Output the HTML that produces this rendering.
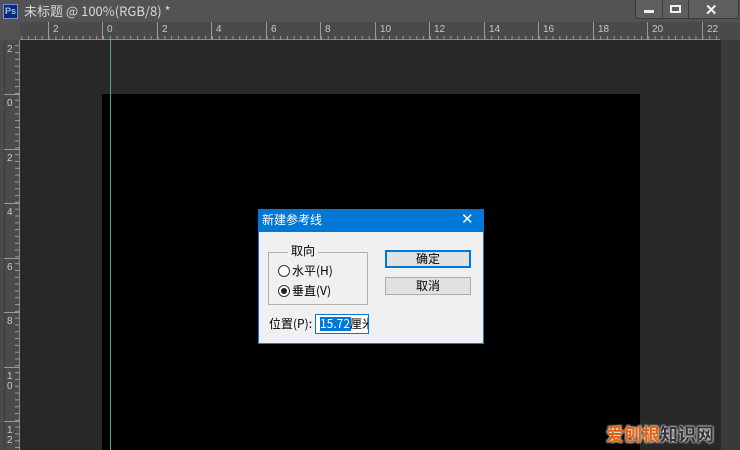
<!DOCTYPE html><html><head><meta charset="utf-8"><style>
*{margin:0;padding:0;box-sizing:border-box}
body{width:740px;height:450px;overflow:hidden;background:#282828;position:relative;font-family:"Liberation Sans","Noto Sans CJK SC",sans-serif}
.a{position:absolute}
.cj{font-family:"Noto Sans CJK SC","Liberation Sans",sans-serif}
</style></head><body>
<div class="a" style="left:0;top:0;width:740px;height:22px;background:#535353"></div>
<div class="a" style="left:3px;top:4px;width:15px;height:15px;background:#0d2a6e;border:1px solid #6f8fd8;color:#9fc2ff;font-size:9px;font-weight:bold;line-height:13px;text-align:center">Ps</div>
<div class="a cj" style="left:24px;top:2px;color:#d8d8d8;font-size:13px;line-height:18px">未标题 @ 100%(RGB/8) *</div>
<div class="a" style="left:635px;top:0;width:104px;height:19px;background:#5e5e5e;border:1px solid #3c3c3c;border-top:0;border-radius:0 0 3px 3px"></div>
<div class="a" style="left:662px;top:0;width:1px;height:19px;background:#3c3c3c"></div>
<div class="a" style="left:688px;top:0;width:1px;height:19px;background:#3c3c3c"></div>
<div class="a" style="left:644px;top:10px;width:10px;height:3px;background:#eee"></div>
<div class="a" style="left:670px;top:5px;width:11px;height:8px;border:2px solid #eee"></div>
<div class="a" style="left:705px;top:1px;color:#eee;font-size:15px;font-weight:bold">✕</div>
<svg class="a" style="left:0;top:22px" width="740" height="428">
<rect x="0" y="0" width="740" height="18" fill="#4a4a4a"/>
<rect x="0" y="0" width="20" height="428" fill="#4a4a4a"/>
<rect x="0" y="0" width="20" height="18" fill="#535353"/>
<rect x="4" y="18" width="1" height="410" fill="#3a3a3a"/>
<rect x="20" y="17" width="700" height="1" fill="#888"/>
<rect x="19" y="18" width="1" height="410" fill="#888"/>
<g stroke="#999" stroke-width="1">
<path d="M48.5 0V18M102.5 0V18M157.5 0V18M211.5 0V18M266.5 0V18M320.5 0V18M375.5 0V18M429.5 0V18M484.5 0V18M538.5 0V18M593.5 0V18M647.5 0V18M702.5 0V18"/>
<path d="M4 72.5H20M4 127.5H20M4 181.5H20M4 236.5H20M4 290.5H20M4 345.5H20M4 399.5H20"/>
</g>
<defs>
<pattern id="h" x="21.3" width="6.81" height="18" patternUnits="userSpaceOnUse"><rect x="0" y="14" width="1" height="4" fill="#999"/></pattern>
<pattern id="v" y="-4" width="20" height="6.81" patternUnits="userSpaceOnUse"><rect x="15" y="0" width="5" height="1" fill="#999"/></pattern>
</defs>
<rect x="20" y="0" width="700" height="18" fill="url(#h)"/>
<rect x="0" y="18" width="20" height="410" fill="url(#v)"/>
<g fill="#c8c8c8" font-size="10" font-family="Liberation Sans">
<text x="53" y="10">2</text><text x="107" y="10">0</text><text x="162" y="10">2</text><text x="216" y="10">4</text><text x="271" y="10">6</text><text x="325" y="10">8</text><text x="380" y="10">10</text><text x="434" y="10">12</text><text x="489" y="10">14</text><text x="543" y="10">16</text><text x="598" y="10">18</text><text x="652" y="10">20</text><text x="707" y="10">22</text>
<text x="7" y="30">2</text><text x="7" y="84">0</text><text x="7" y="139">2</text><text x="7" y="193">4</text><text x="7" y="248">6</text><text x="7" y="302">8</text><text x="7" y="357">1</text><text x="7" y="367">0</text><text x="7" y="411">1</text><text x="7" y="421">2</text>
</g>
</svg>
<div class="a" style="left:720px;top:40px;width:20px;height:410px;background:#3a3a3a;border-left:1px solid #2a2a2a"></div>
<div class="a" style="left:102px;top:94px;width:538px;height:356px;background:#000"></div>
<div class="a" style="left:110px;top:40px;width:1px;height:410px;background:#4aa8a3"></div>
<div class="a" style="left:258px;top:209px;width:226px;height:135px;background:#f0f0f0;border:1px solid #1979ca"></div>
<div class="a" style="left:258px;top:209px;width:226px;height:23px;background:#0078d7"></div>
<div class="a cj" style="left:262px;top:211px;color:#fff;font-size:12px;line-height:18px">新建参考线</div>
<div class="a" style="left:461px;top:210px;color:#fff;font-size:15px;line-height:20px">✕</div>
<div class="a" style="left:268px;top:252px;width:100px;height:53px;border:1px solid #b0b0b0"></div>
<div class="a cj" style="left:288px;top:243px;background:#f0f0f0;padding:0 3px;font-size:12px;line-height:16px;color:#000">取向</div>
<div class="a" style="left:278px;top:265px;width:12px;height:12px;border:1px solid #333;border-radius:50%;background:#fff"></div>
<div class="a cj" style="left:292px;top:263px;font-size:12px;line-height:16px">水平(H)</div>
<div class="a" style="left:278px;top:285px;width:12px;height:12px;border:1px solid #333;border-radius:50%;background:#fff"></div>
<div class="a" style="left:281px;top:288px;width:6px;height:6px;border-radius:50%;background:#222"></div>
<div class="a cj" style="left:292px;top:283px;font-size:12px;line-height:16px">垂直(V)</div>
<div class="a cj" style="left:385px;top:250px;width:86px;height:18px;border:2px solid #0078d7;background:#e1e1e1;font-size:12px;line-height:14px;text-align:center">确定</div>
<div class="a cj" style="left:385px;top:277px;width:86px;height:18px;border:1px solid #adadad;background:#e1e1e1;font-size:12px;line-height:16px;text-align:center">取消</div>
<div class="a cj" style="left:269px;top:316px;font-size:12px;line-height:16px">位置(P):</div>
<div class="a" style="left:315px;top:314px;width:54px;height:20px;border:1px solid #0078d7;background:#fff;overflow:hidden;white-space:nowrap"></div>
<div class="a" style="left:320px;top:317px;width:31px;height:14px;background:#0078d7"></div>
<div class="a cj" style="left:320px;top:315px;font-size:12px;line-height:18px;width:48px;overflow:hidden;white-space:nowrap"><span style="color:#fff">15.72</span>厘米</div>
<div class="a cj" style="left:606px;top:422px;font-size:18px;line-height:24px;font-weight:bold;text-shadow:0 0 2px #fff,0 0 2px #fff"><span style="color:#e8600e">爱刨根</span><span style="color:#333">知识网</span></div>
</body></html>
